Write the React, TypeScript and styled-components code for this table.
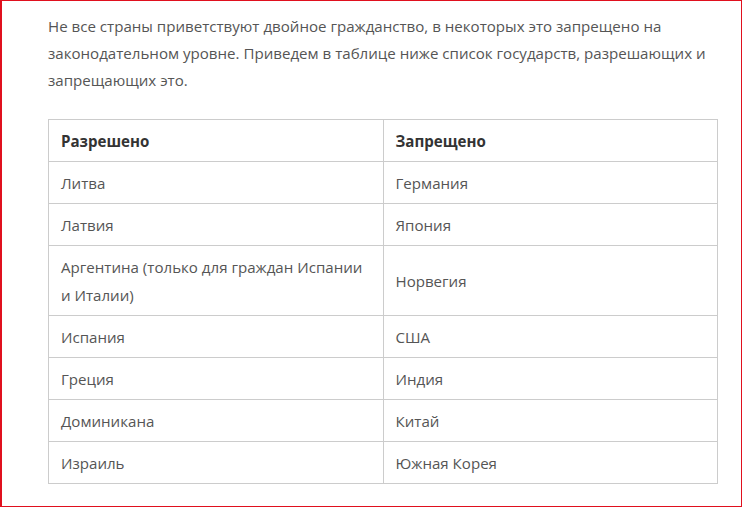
import React, { FC } from 'react';
import styled, { createGlobalStyle } from 'styled-components';

const GlobalStyle = createGlobalStyle`
  html, body {
    margin: 0;
    padding: 0;
    background: #fff;
  }
  body {
    font-family: 'Open Sans', 'Noto Sans', sans-serif;
  }
`;

const Frame = styled.div`
  box-sizing: border-box;
  width: 742px;
  height: 507px;
  border: 1px solid #e0101e;
  border-left-width: 2px;
  padding: 12px 0 0 46px;
  background: #fff;
`;

const Content = styled.div`
  width: 670px;
  color: #555;
  font-size: 15.1px;
`;

const Lead = styled.p`
  margin: 0 0 25px;
  line-height: 27px;
`;

const Table = styled.table`
  width: 100%;
  border-collapse: collapse;
  table-layout: fixed;
  border: 1px solid #ccc;
`;

const Cell = styled.td<{ $head?: boolean }>`
  border: 1px solid #ccc;
  padding: 7px 12px 6px;
  line-height: 28px;
  vertical-align: middle;
  text-align: left;
  font-weight: ${(p) => (p.$head ? 700 : 400)};
  color: ${(p) => (p.$head ? '#333' : '#555')};
`;

const rows: [string, string][] = [
  ['Литва', 'Германия'],
  ['Латвия', 'Япония'],
  ['Аргентина (только для граждан Испании и Италии)', 'Норвегия'],
  ['Испания', 'США'],
  ['Греция', 'Индия'],
  ['Доминикана', 'Китай'],
  ['Израиль', 'Южная Корея'],
];

const App: FC = () => (
  <>
    <GlobalStyle />
    <Frame>
      <Content>
        <Lead>
          Не все страны приветствуют двойное гражданство, в некоторых это запрещено на
          законодательном уровне. Приведем в таблице ниже список государств, разрешающих и
          запрещающих это.
        </Lead>
        <Table>
          <tbody>
            <tr>
              <Cell $head>Разрешено</Cell>
              <Cell $head>Запрещено</Cell>
            </tr>
            {rows.map(([allowed, banned]) => (
              <tr key={allowed}>
                <Cell>{allowed}</Cell>
                <Cell>{banned}</Cell>
              </tr>
            ))}
          </tbody>
        </Table>
      </Content>
    </Frame>
  </>
);

export default App;
